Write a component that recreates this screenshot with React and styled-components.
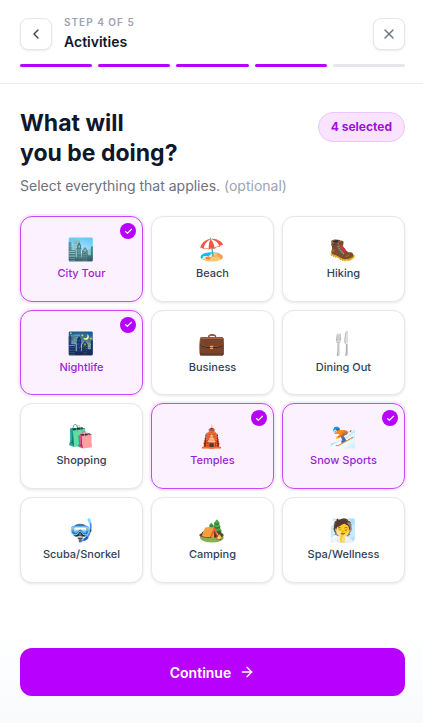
import React, { useState } from 'react'
import styled, { createGlobalStyle, ThemeProvider } from 'styled-components'
import { ArrowRight, Check, ChevronLeft, X } from 'lucide-react'

const theme = {
  main: '#b800ff',
  ink: '#0f172a',
  text: '#334155',
  muted: '#6b7280',
  faint: '#9ca3af',
  line: '#e5e7eb',
  font: "Inter, 'Liberation Sans', sans-serif"
}

const GlobalStyle = createGlobalStyle`
  * {
    box-sizing: border-box;
  }
  body {
    margin: 0;
    background: #fff;
  }
  button {
    font-family: inherit;
    cursor: pointer;
  }
`
const Page = styled.div`
  display: flex;
  flex-direction: column;
  min-height: 100vh;
  background: #fff;
  color: ${props => props.theme.ink};
  font-family: ${props => props.theme.font};
`
const Header = styled.header`
  padding: 16px 18px 16px 20px;
  border-bottom: 1px solid #ebebee;
`
const HeaderRow = styled.div`
  display: flex;
  align-items: center;
  gap: 12px;
`
const IconButton = styled.button`
  display: flex;
  align-items: center;
  justify-content: center;
  width: 32px;
  height: 32px;
  padding: 0;
  background: #fff;
  border: 1px solid ${props => props.theme.line};
  border-radius: 8px;
  box-shadow: 0 1px 2px rgba(0, 0, 0, 0.08);
  color: ${props => props.color};
`
const StepInfo = styled.div`
  flex: 1;
`
const StepCount = styled.p`
  margin: 0 0 4px;
  color: ${props => props.theme.faint};
  font-size: 10px;
  font-weight: 600;
  line-height: 12px;
  letter-spacing: 1px;
  text-transform: uppercase;
`
const StepName = styled.p`
  margin: 0;
  font-size: 14px;
  font-weight: 600;
  line-height: 20px;
`
const Progress = styled.div`
  display: flex;
  gap: 6px;
  margin-top: 12px;
`
const Segment = styled.span`
  flex: 1;
  height: 3px;
  border-radius: 2px;
  background: ${props => (props.$done ? props.theme.main : props.theme.line)};
`
const Content = styled.main`
  flex: 1;
  padding: 24px 18px 24px 20px;
`
const TitleRow = styled.div`
  display: flex;
  align-items: flex-start;
  justify-content: space-between;
`
const Title = styled.h1`
  margin: 0;
  font-size: 23px;
  font-weight: 700;
  line-height: 30px;
`
const Count = styled.span`
  margin-top: 4px;
  padding: 6px 12px;
  background: #f9e3ff;
  border: 1px solid #edc5ff;
  border-radius: 15px;
  color: #a010e0;
  font-size: 12px;
  font-weight: 700;
  line-height: 16px;
`
const Hint = styled.p`
  margin: 8px 0 20px;
  color: ${props => props.theme.muted};
  font-size: 14px;
  line-height: 20px;
`
const Optional = styled.span`
  color: ${props => props.theme.faint};
`
const Grid = styled.div`
  display: grid;
  grid-template-columns: repeat(3, 1fr);
  gap: 8px;
`
const Card = styled.button`
  position: relative;
  display: flex;
  flex-direction: column;
  align-items: center;
  justify-content: center;
  gap: 3px;
  aspect-ratio: 33 / 23;
  padding: 0;
  background: ${props => (props.$active ? '#fcf2ff' : '#fff')};
  border: 1px solid ${props => (props.$active ? '#c946f5' : props.theme.line)};
  border-radius: 12px;
  box-shadow: ${props =>
    props.$active
      ? '0 0 0 2px rgba(184, 0, 255, 0.08)'
      : '0 1px 3px rgba(0, 0, 0, 0.1)'};
  color: ${props => (props.$active ? '#9b1fd6' : props.theme.text)};
`
const Emoji = styled.span`
  font-family: 'Noto Color Emoji', sans-serif;
  font-size: 22px;
  line-height: 25px;
`
const Label = styled.span`
  font-size: 11px;
  font-weight: 500;
  line-height: 16px;
`
const Tick = styled.span`
  position: absolute;
  top: 6px;
  right: 6px;
  display: flex;
  align-items: center;
  justify-content: center;
  width: 16px;
  height: 16px;
  border-radius: 50%;
  background: ${props => props.theme.main};
  color: #fff;
`
const Footer = styled.footer`
  padding: 24px 18px 27px 20px;
  background: linear-gradient(#fff, #f8fafc);
`
const Continue = styled.button`
  display: flex;
  align-items: center;
  justify-content: center;
  gap: 8px;
  width: 100%;
  height: 48px;
  border: none;
  border-radius: 12px;
  background: ${props => props.theme.main};
  color: #fff;
  font-size: 14px;
  font-weight: 600;
`

const activities = [
  { name: 'City Tour', emoji: '🏙️' },
  { name: 'Beach', emoji: '🏖️' },
  { name: 'Hiking', emoji: '🥾' },
  { name: 'Nightlife', emoji: '🌃' },
  { name: 'Business', emoji: '💼' },
  { name: 'Dining Out', emoji: '🍴' },
  { name: 'Shopping', emoji: '🛍️' },
  { name: 'Temples', emoji: '🛕' },
  { name: 'Snow Sports', emoji: '⛷️' },
  { name: 'Scuba/Snorkel', emoji: '🤿' },
  { name: 'Camping', emoji: '🏕️' },
  { name: 'Spa/Wellness', emoji: '🧖' }
]

const steps = [1, 2, 3, 4, 5]
const current = 4

const App = () => {
  const [selected, setSelected] = useState([
    'City Tour',
    'Nightlife',
    'Temples',
    'Snow Sports'
  ])

  const toggle = name => {
    setSelected(
      selected.includes(name)
        ? selected.filter(item => item !== name)
        : [...selected, name]
    )
  }

  return (
    <ThemeProvider theme={theme}>
      <GlobalStyle />
      <Page>
        <Header>
          <HeaderRow>
            <IconButton color="#374151" aria-label="Back">
              <ChevronLeft size={16} />
            </IconButton>
            <StepInfo>
              <StepCount>Step {current} of {steps.length}</StepCount>
              <StepName>Activities</StepName>
            </StepInfo>
            <IconButton color="#6b7280" aria-label="Close">
              <X size={16} />
            </IconButton>
          </HeaderRow>
          <Progress>
            {steps.map(step => (
              <Segment key={step} $done={step <= current} />
            ))}
          </Progress>
        </Header>
        <Content>
          <TitleRow>
            <Title>
              What will
              <br />
              you be doing?
            </Title>
            <Count>{selected.length} selected</Count>
          </TitleRow>
          <Hint>
            Select everything that applies. <Optional>(optional)</Optional>
          </Hint>
          <Grid>
            {activities.map(({ name, emoji }) => {
              const active = selected.includes(name)
              return (
                <Card
                  key={name}
                  $active={active}
                  aria-pressed={active}
                  onClick={() => toggle(name)}
                >
                  {active && (
                    <Tick>
                      <Check size={9} strokeWidth={3} />
                    </Tick>
                  )}
                  <Emoji aria-hidden="true">{emoji}</Emoji>
                  <Label>{name}</Label>
                </Card>
              )
            })}
          </Grid>
        </Content>
        <Footer>
          <Continue>
            Continue
            <ArrowRight size={16} />
          </Continue>
        </Footer>
      </Page>
    </ThemeProvider>
  )
}

export default App
